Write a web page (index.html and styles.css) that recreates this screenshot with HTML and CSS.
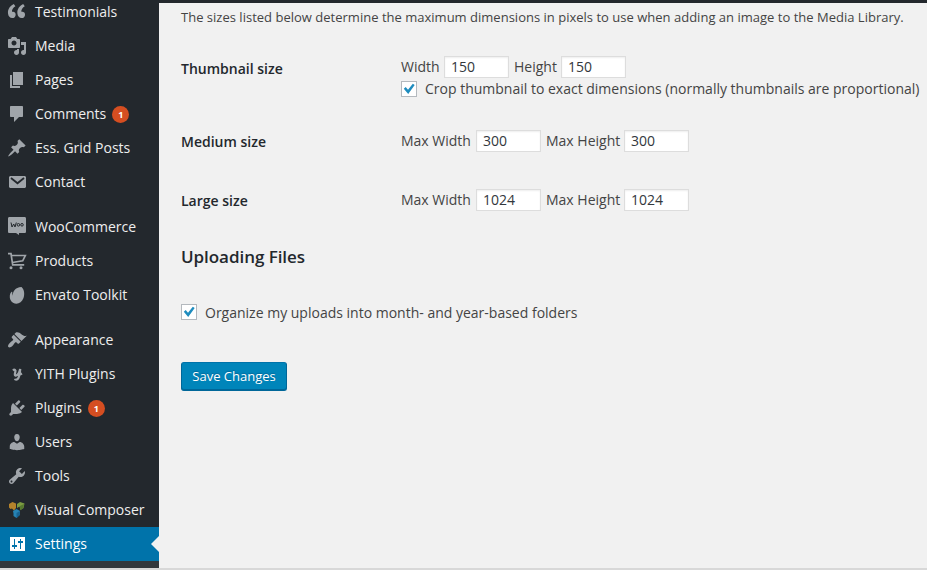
FILE: index.html
```html
<!DOCTYPE html>
<html lang="en">
<head>
<meta charset="utf-8">
<title>Media Settings</title>
<link rel="stylesheet" href="styles.css">
</head>
<body>
<div class="admin">
  <nav class="sidebar">
    <a class="item"><svg class="icon" viewBox="0 0 20 20"><path transform="translate(-2.4 -2.6) scale(1.165)" d="M9.49 13.22c0-.74-.2-1.38-.61-1.9-.62-.78-1.83-.88-2.53-.72-.29-1.65 1.11-3.75 2.92-4.65L7.88 4c-2.73 1.3-5.42 4.28-4.96 8.05C3.21 14.43 4.59 16 6.54 16c.85 0 1.56-.25 2.12-.75s.83-1.18.83-2.03zm8.05 0c0-.74-.2-1.38-.61-1.9-.63-.78-1.83-.88-2.53-.72-.29-1.65 1.11-3.75 2.92-4.65L15.93 4c-2.73 1.3-5.41 4.28-4.95 8.05.28 2.38 1.66 3.95 3.61 3.95.85 0 1.56-.25 2.12-.75s.83-1.18.83-2.03z"/></svg><span class="name">Testimonials</span></a>
    <a class="item"><svg class="icon" viewBox="0 0 20 20"><path d="M13 11V4c0-.55-.45-1-1-1h-1.67L9 1H5L3.67 3H2c-.55 0-1 .45-1 1v7c0 .55.45 1 1 1h10c.55 0 1-.45 1-1zM7 4.5c1.38 0 2.5 1.12 2.5 2.5S8.38 9.5 7 9.5 4.5 8.38 4.5 7 5.62 4.5 7 4.5zM14 6h5v10.5c0 1.38-1.12 2.5-2.5 2.5S14 17.88 14 16.5s1.12-2.5 2.5-2.5c.17 0 .34.02.5.05V9h-3V6zm-4 8.05V13h2v3.5c0 1.38-1.12 2.5-2.5 2.5S7 17.88 7 16.5 8.12 14 9.5 14c.17 0 .34.02.5.05z"/></svg><span class="name">Media</span></a>
    <a class="item"><svg class="icon" viewBox="0 0 20 20"><path d="M6 15V2h10v13H6zm-1 1h8v2H3V5h2v11z"/></svg><span class="name">Pages</span></a>
    <a class="item"><svg class="icon" viewBox="0 0 20 20"><path d="M4 2h11c.6 0 1 .4 1 1v9c0 .6-.4 1-1 1h-3l-5 5v-5H4c-.6 0-1-.4-1-1V3c0-.6.4-1 1-1z"/></svg><span class="name">Comments</span><span class="count">1</span></a>
    <a class="item"><svg class="icon" viewBox="0 0 20 20"><path d="M10.44 3.02l1.82-1.82 6.36 6.35-1.83 1.82c-1.05-.68-2.48-.57-3.41.36l-.75.75c-.92.93-1.04 2.35-.35 3.41l-1.83 1.82-2.41-2.41-2.8 2.79c-.42.42-3.38 2.71-3.8 2.29s1.86-3.39 2.28-3.81l2.79-2.79L4.1 9.36l1.83-1.82c1.05.69 2.48.57 3.4-.36l.75-.75c.93-.92 1.05-2.35.36-3.41z"/></svg><span class="name">Ess. Grid Posts</span></a>
    <a class="item"><svg class="icon" viewBox="0 0 20 20"><path d="M3 4h15l1 1v10l-1 1H3l-1-1V5z"/><path class="cut" d="M4 6l6.5 5.3L17 6"/></svg><span class="name">Contact</span></a>
    <div class="gap"></div>
    <a class="item"><svg class="icon" viewBox="0 0 20 20"><path d="M2.500 0h15c1 0 1.500.6 1.500 1.500v13c0 1-.6 1.500-1.500 1.500H12v2l-3-2H2.500C1.500 16 1 15.500 1 14.500v-13C1 .6 1.500 0 2.500 0z"/><path class="cut thin" d="M4 5.500l1 4.500 1.700-3 1.300 3L9.300 5.500"/><circle class="cut thin" cx="11.400" cy="7.800" r="1.300"/><circle class="cut thin" cx="15" cy="7.800" r="1.300"/></svg><span class="name">WooCommerce</span></a>
    <a class="item"><svg class="icon" viewBox="0 0 20 20"><path class="line" d="M1 2.700h3l1.700 11.100h11.500M4.300 4.500h14l-2.600 5.300L5.300 11.500"/><circle cx="4" cy="16.700" r="1.500"/><circle cx="14" cy="16.700" r="1.500"/></svg><span class="name">Products</span></a>
    <a class="item"><svg class="icon" viewBox="0 0 20 20"><path d="M14.500 2c2.500 2 3.600 7 1.900 11.300C14.600 18 10 20 6 17.700c-2.300-1.400-3.500-4-3.200-7C3 9 3.700 7.600 4.600 6.800c.5-.4.800 0 .7.500-.2 1.300-.1 2.500.3 3.400C5.800 6.500 8 2.500 14.500 2z"/></svg><span class="name">Envato Toolkit</span></a>
    <div class="gap"></div>
    <a class="item"><svg class="icon" viewBox="0 0 20 20"><path d="M14.480 11.060L7.410 3.990l1.500-1.500c.5-.56 2.300-.47 3.510.32 1.210.8 1.430 1.280 2.910 2.100 1.180.64 2.450 1.260 4.450.85zm-.71.71L6.700 4.700 4.930 6.470c-.39.39-.39 1.020 0 1.410l1.060 1.060c.39.39.39 1.030 0 1.420-.6.6-1.430 1.110-2.210 1.690-.35.26-.7.53-1.010.84C1.430 14.230.4 16.080 1.400 17.070c.99 1 2.840-.03 4.180-1.360.31-.31.58-.66.85-1.020.57-.78 1.080-1.610 1.690-2.210.39-.39 1.020-.39 1.410 0l1.060 1.060c.39.39 1.020.39 1.410 0z"/></svg><span class="name">Appearance</span></a>
    <a class="item"><svg class="icon" viewBox="0 0 20 20"><path class="line bold" d="M6 6.500c1.500-1.500 3-.3 2.300 1.500-.8 2.500-.5 4 1 3.500C11 11 12.500 8 13.200 5c-.3 4-.8 7.500-2 9.300-1.100 1.700-3 1.500-3.200.4M11 11.500l4-2"/></svg><span class="name">YITH Plugins</span></a>
    <a class="item"><svg class="icon" viewBox="0 0 20 20"><path d="M13.110 4.360L9.870 7.600 8 5.730l3.240-3.240c.35-.34 1.050-.2 1.560.32.52.51.66 1.210.31 1.550zm-8 1.770l.91-1.120 9.010 9.010-1.190.84c-.71.71-2.630 1.160-3.820 1.160H6.140L4.900 17.260c-.59.59-1.540.59-2.120 0-.59-.58-.59-1.530 0-2.120l1.240-1.240v-3.880c0-1.130.4-3.190 1.090-3.890zm7.260 3.970l3.240-3.240c.34-.35 1.040-.21 1.550.31.52.51.66 1.210.31 1.550l-3.240 3.250z"/></svg><span class="name">Plugins</span><span class="count">1</span></a>
    <a class="item"><svg class="icon" viewBox="0 0 20 20"><path d="M10 9.250c-2.270 0-2.730-3.440-2.730-3.440C7 4.020 7.820 2 9.970 2c2.160 0 2.980 2.020 2.710 3.810 0 0-.41 3.440-2.680 3.440zm0 2.570L12.720 10c2.390 0 4.520 2.330 4.520 4.530v2.490s-3.650 1.130-7.240 1.130c-3.650 0-7.240-1.130-7.240-1.130v-2.490c0-2.250 1.940-4.480 4.470-4.480z"/></svg><span class="name">Users</span></a>
    <a class="item"><svg class="icon" viewBox="0 0 20 20"><path d="M16.680 9.770c-1.340 1.340-3.300 1.670-4.950.99l-5.410 6.520c-.99.99-2.590.99-3.580 0s-.99-2.590 0-3.570l6.520-5.420c-.68-1.650-.35-3.610.99-4.950 1.280-1.280 3.120-1.620 4.720-1.060l-2.890 2.890 2.820 2.820 2.860-2.870c.53 1.580.18 3.390-1.080 4.650zM3.810 16.210c.4.39 1.040.39 1.430 0 .4-.4.4-1.040 0-1.430-.39-.4-1.030-.4-1.430 0-.39.39-.39 1.030 0 1.430z"/></svg><span class="name">Tools</span></a>
    <a class="item"><svg class="icon" viewBox="0 0 20 20"><path fill="#b5832b" d="M2 4l3.500-2L9 3.500V8l-2 2.500-2-2L3.500 9 2 7.500z"/><path fill="#7d9c42" d="M10 4l3-2 4.500 1.500L16.500 8l-3 2-1-3.500L10 8z"/><path fill="#56792f" d="M13 6l4-2-.7 4.200-3 2z"/><path fill="#2683b4" d="M6 11l3.500-2 3.500 2v3.500L9.500 18 6.500 16v-2.500z"/><path fill="#186391" d="M9.500 13l3.500-2v4l-3.500 3z"/></svg><span class="name">Visual Composer</span></a>
    <a class="item current"><svg class="icon" viewBox="0 0 20 20"><path fill-rule="evenodd" d="M3 3h15v14H3zM7 5v6H5v2h2v2h1v-2h2v-2H8V5zM13 5v2h-2v2h2v6h1V9h2V7h-2V5z"/></svg><span class="name">Settings</span></a>
    <div class="submenu"></div>
  </nav>
  <main class="content">
    <p class="intro">The sizes listed below determine the maximum dimensions in pixels to use when adding an image to the Media Library.</p>
    <div class="row thumbnail">
      <h3 class="label">Thumbnail size</h3>
      <div class="fields">
        <div class="pair"><label class="w">Width</label><input type="text" value="150"><label class="h">Height</label><input type="text" value="150"></div>
        <div class="check"><span class="box"><svg viewBox="0 0 14 14"><path d="M1.800 6.700l1.900-1.600 2.300 2.700 4.800-6 1.900 1.300L6.200 12z"/></svg></span><span class="crop">Crop thumbnail to exact dimensions (normally thumbnails are proportional)</span></div>
      </div>
    </div>
    <div class="row medium">
      <h3 class="label">Medium size</h3>
      <div class="pair"><label class="mw">Max Width</label><input type="text" value="300"><label class="mh">Max Height</label><input type="text" value="300"></div>
    </div>
    <div class="row large">
      <h3 class="label">Large size</h3>
      <div class="pair"><label class="mw">Max Width</label><input type="text" value="1024"><label class="mh">Max Height</label><input type="text" value="1024"></div>
    </div>
    <h2 class="title">Uploading Files</h2>
    <div class="check organize"><span class="box"><svg viewBox="0 0 14 14"><path d="M1.800 6.700l1.900-1.600 2.300 2.700 4.800-6 1.900 1.300L6.200 12z"/></svg></span><span class="org">Organize my uploads into month- and year-based folders</span></div>
    <button class="save" type="button">Save Changes</button>
  </main>
</div>
</body>
</html>
```
FILE: styles.css
```css
* { box-sizing: border-box; }
body {
  margin: 0;
  height: 570px;
  overflow: hidden;
  background: #f1f1f1;
  color: #444;
  font: 14px/20px "Open Sans", sans-serif;
}
.admin {
  display: flex;
  height: 570px;
  border-top: 3px solid #23282d;
  border-bottom: 2px solid #d8d8d8;
}
.sidebar {
  display: flex;
  flex-direction: column;
  flex: none;
  width: 159px;
  margin-top: -8px;
  background: #23282d;
}
.item {
  position: relative;
  display: flex;
  align-items: center;
  flex: none;
  height: 34px;
  padding-left: 7px;
  color: #eee;
  white-space: nowrap;
}
.icon { width: 20px; height: 20px; margin-right: 8px; fill: #a0a5aa; flex: none; }
.icon .cut { fill: none; stroke: #23282d; stroke-width: 1.8; }
.icon .thin { stroke-width: 1; }
.icon .line { fill: none; stroke: #a0a5aa; stroke-width: 1.7; }
.icon .bold { stroke-width: 2.3; }
.gap { height: 11px; flex: none; }
.count {
  width: 17px;
  height: 17px;
  margin-left: 6px;
  border-radius: 50%;
  background: #d54e21;
  color: #fff;
  font-size: 9px;
  font-weight: 700;
  line-height: 17px;
  text-align: center;
}
.current { background: #0073aa; color: #fff; }
.current .icon { fill: #fff; }
.current::after {
  content: "";
  position: absolute;
  right: 0;
  top: 9px;
  border: 8px solid transparent;
  border-left: 0;
  border-right-color: #f1f1f1;
}
.submenu { flex: 1; background: #32373c; }
.content { flex: 1; min-width: 0; padding: 4px 0 0 22px; white-space: nowrap; }
.intro { margin: 0; font-size: 13px; line-height: 20px; letter-spacing: .01px; }
.row { display: grid; grid-template-columns: 220px 1fr; }
.thumbnail { margin-top: 29px; }
.medium { margin-top: 30px; }
.large { margin-top: 36px; }
.label { margin: 2px 0 0; color: #23282d; font-size: 14px; font-weight: 600; line-height: 22px; }
.medium .label, .large .label { margin-top: 1px; }
.pair { display: flex; height: 22px; line-height: 22px; }
.w { width: 43px; }
.h { width: 52px; padding-left: 5px; }
.mw { width: 75px; }
.mh { width: 83px; padding-left: 5px; }
input {
  width: 65px;
  height: 22px;
  padding: 0 6px 2px;
  border: 1px solid #ddd;
  background: #fff;
  box-shadow: inset 0 1px 2px rgba(0, 0, 0, .07);
  color: #32373c;
  font: 14px "Open Sans", sans-serif;
}
.check { display: flex; align-items: center; gap: 8px; height: 22px; }
.box {
  width: 16px;
  height: 16px;
  border: 1px solid #b4b9be;
  background: #fff;
  flex: none;
}
.box svg { display: block; width: 14px; height: 14px; fill: #1e8cbe; }
.title { margin: 33px 0 0; color: #23282d; font-size: 17px; font-weight: 600; line-height: 24px; letter-spacing: -.05px; }
.organize { margin-top: 32px; }
.org { padding-top: 2px; }
.save {
  display: block;
  width: 106px;
  height: 29px;
  margin-top: 39px;
  padding: 0 0 2px;
  border: 1px solid #006799;
  border-top-color: #0073aa;
  border-radius: 3px;
  background: #0085ba;
  box-shadow: inset 0 -1px #006799;
  color: #fff;
  font: 13px "Open Sans", sans-serif;
  text-shadow: 0 -1px 1px #006799;
}
```
